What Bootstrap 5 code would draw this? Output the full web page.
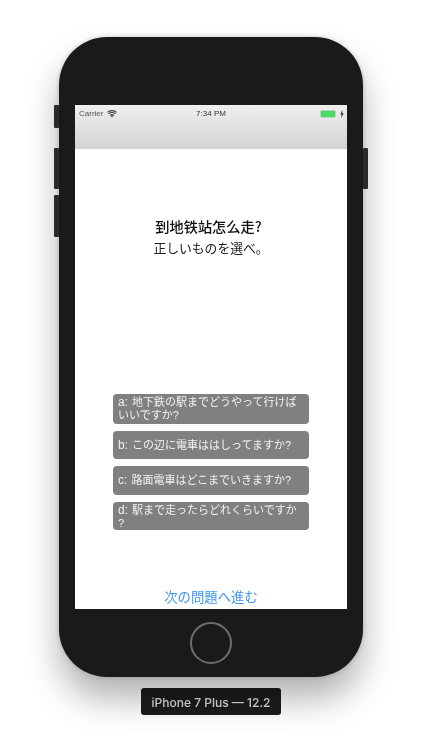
<!DOCTYPE html>
<html lang="ja">
<head>
<meta charset="utf-8">
<title>iPhone 7 Plus Simulator</title>
<link rel="stylesheet" href="https://cdn.jsdelivr.net/npm/bootstrap@5.3.0/dist/css/bootstrap.min.css">
<style>
html, body { height: 750px; overflow: hidden; background: #fff; }
body { font-family: "Liberation Sans", "Noto Sans CJK JP", sans-serif; }
.stage { height: 750px; padding-top: 37px; filter: blur(.3px); }
.phone-body { width: 304px; height: 640px; padding-top: 68px; background: #1a1a1a; border-radius: 48px; box-shadow: 0 22px 34px rgba(0,0,0,.3), 0 0 5px rgba(0,0,0,.2); }
.side-key { width: 5px; background: #2a2a2a; border-radius: 1px; }
.key-mute { left: -5px; top: 68px; height: 23px; }
.key-up { left: -5px; top: 111px; height: 41px; }
.key-down { left: -5px; top: 158px; height: 42px; }
.key-power { right: -5px; top: 111px; height: 41px; }
.sim-screen { width: 272px; height: 504px; background: #fff; }
.bar-top { height: 44px; background: linear-gradient(#efefef, #d3d3d3); }
.status-row { height: 16px; padding: 1px 3px 0 4px; font-size: 8px; color: #555; }
.status-time { font-size: 8px; line-height: 10px; color: #333; left: 0; right: 0; top: 4px; }
.cell-level { width: 16px; height: 8px; background: #4cd964; border: 1px solid #b9d9be; border-radius: 2px; }
.question-zone { padding-top: 66px; height: 245px; }
.q-title { font-family: "Noto Sans CJK SC", sans-serif; font-size: 14.2px; line-height: 22px; font-weight: 500; color: #111; padding-right: 5px; }
.q-sub { font-size: 12.8px; line-height: 23px; color: #222; }
.answers { width: 196px; }
.answer-btn { font-size: 11px; line-height: 13px; background: #808080; color: #f2f2f2; border-radius: 4px; padding: 2px 5px; text-align: left; }
.opt-key { font-size: 12px; margin-right: 1px; }
.a1 { height: 30px; margin-bottom: 7px; }
.a2 { height: 28px; margin-bottom: 7px; }
.a3 { height: 29px; margin-bottom: 7px; }
.a4 { height: 28px; }
.next-link { font-size: 13.4px; line-height: 16px; color: #3d97f0; margin-top: 60px; }
.home-zone { height: 68px; }
.home-key { width: 42px; height: 42px; border: 2px solid #6e6e6e; border-radius: 50%; }
.device-tag { width: 140px; height: 27px; margin-top: 11px; padding-top: 2px; background: #1c1c1c; color: #e0e0e0; font-family: Inter, "Liberation Sans", sans-serif; font-weight: 500; font-size: 12px; border-radius: 3px; }
</style>
</head>
<body class="m-0">
<div class="stage d-flex flex-column align-items-center">
  <div class="phone-body position-relative d-flex flex-column align-items-center">
    <div class="side-key key-mute position-absolute"></div>
    <div class="side-key key-up position-absolute"></div>
    <div class="side-key key-down position-absolute"></div>
    <div class="side-key key-power position-absolute"></div>
    <div class="sim-screen d-flex flex-column align-items-center">
      <div class="bar-top w-100 position-relative">
        <div class="status-row d-flex align-items-center justify-content-between">
          <div class="d-flex align-items-center gap-1">
            <span>Carrier</span>
            <svg width="10" height="8" viewBox="0 0 10 8" aria-hidden="true"><path d="M5 7.6 3.6 6a2 2 0 0 1 2.8 0Z" fill="#444"/><path d="M2.7 5.1a3.4 3.4 0 0 1 4.6 0l-.6.7a2.5 2.5 0 0 0-3.4 0Z" fill="#444"/><path d="M1.3 3.5a5.4 5.4 0 0 1 7.4 0l-.7.8a4.4 4.4 0 0 0-6 0Z" fill="#444"/><path d="M0 2a7.4 7.4 0 0 1 10 0l-.7.8a6.4 6.4 0 0 0-8.6 0Z" fill="#444"/></svg>
          </div>
          <div class="d-flex align-items-center gap-1">
            <span class="cell-level d-block"></span>
            <svg width="4" height="8" viewBox="0 0 4 8" aria-hidden="true"><path d="M2.4 0 .3 4.4h1.3L1.2 8l2.5-4.7H2.3Z" fill="#333"/></svg>
          </div>
        </div>
        <div class="status-time position-absolute text-center">7:34 PM</div>
      </div>
      <div class="question-zone text-center">
        <div class="q-title">到地铁站怎么走?</div>
        <div class="q-sub">正しいものを選べ。</div>
      </div>
      <div class="answers d-flex flex-column">
        <div class="answer-btn a1"><span class="opt-key">a:</span> 地下鉄の駅までどうやって行けば<br>いいですか?</div>
        <div class="answer-btn a2 d-flex align-items-center"><span><span class="opt-key">b:</span> この辺に電車ははしってますか?</span></div>
        <div class="answer-btn a3 d-flex align-items-center"><span><span class="opt-key">c:</span> 路面電車はどこまでいきますか?</span></div>
        <div class="answer-btn a4"><span class="opt-key">d:</span> 駅まで走ったらどれくらいですか<br>?</div>
      </div>
      <div class="next-link">次の問題へ進む</div>
    </div>
    <div class="home-zone d-flex align-items-center justify-content-center">
      <div class="home-key"></div>
    </div>
  </div>
  <div class="device-tag d-flex align-items-center justify-content-center">iPhone 7 Plus — 12.2</div>
</div>
<script src="https://cdn.jsdelivr.net/npm/bootstrap@5.3.0/dist/js/bootstrap.bundle.min.js"></script>
</body>
</html>
